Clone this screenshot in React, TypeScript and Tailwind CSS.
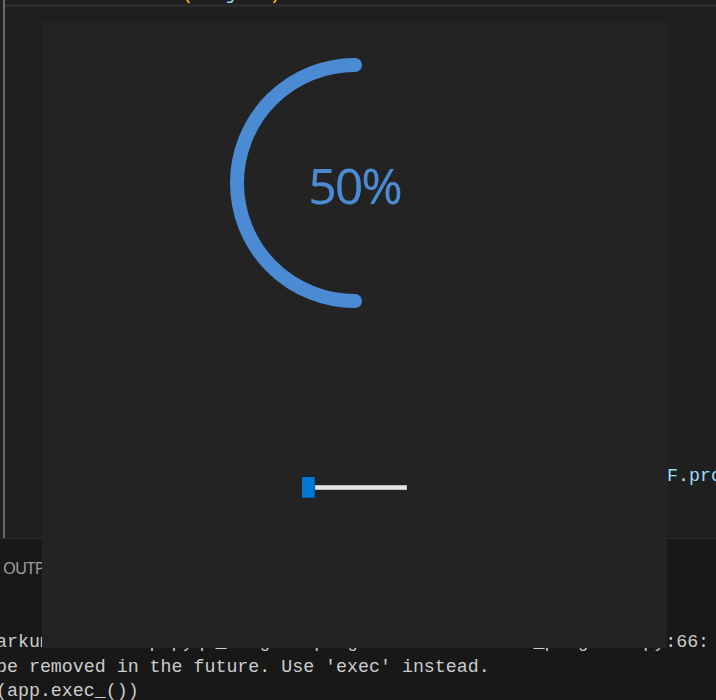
import React from "react";

const mono = { fontFamily: '"Liberation Mono", "DejaVu Sans Mono", monospace' };

export default function App() {
  return (
    <div className="relative w-[716px] h-[700px] overflow-hidden bg-[#1f1f1f]">
      {/* Editor area */}
      <div className="flex h-[538px]">
        <div className="w-[3px]" />
        <div className="w-[2px] bg-[#6a6a6a]" />
        <div className="flex-1 min-w-0 flex flex-col">
          <div className="h-[4px] overflow-hidden">
            <div
              className="-mt-[18px] pl-[177px] text-[18.3px] leading-[25px] whitespace-pre"
              style={mono}
            >
              <span className="text-[#ffd700]">(</span>
              <span>{"   "}</span>
              <span className="text-[#9cdcfe]">j</span>
              <span>{"   "}</span>
              <span className="text-[#ffd700]">)</span>
            </div>
          </div>
          <div className="h-[3px] bg-[#2a2a2a]" />
          <div
            className="mt-[457px] pl-[662px] text-[18.3px] leading-[25px] whitespace-nowrap"
            style={mono}
          >
            <span className="text-[#9cdcfe]">F</span>
            <span className="text-[#d4d4d4]">.</span>
            <span className="text-[#9cdcfe]">progress</span>
          </div>
        </div>
      </div>

      {/* Panel */}
      <div className="h-[162px] border-t border-[#2b2b2b] bg-[#181818] overflow-hidden">
        <div
          className="pt-[19px] pl-[3px] text-[16.5px] leading-[20px] text-[#9d9d9d] tracking-[-0.8px]"
          style={{ fontFamily: '"Noto Sans", "Open Sans", sans-serif' }}
        >
          OUTPUT
        </div>
        <div
          className="mt-[52px] -ml-[4px] text-[18.3px] leading-[24.5px] text-[#cccccc] whitespace-pre"
          style={mono}
        >
          <div>{"arkumar\\Desktop\\pyqt_widgets\\progress\\src\\rounded_progress.py:66: DeprecationWarning: exec_ is deprecated and will"}</div>
          <div>{"be removed in the future. Use 'exec' instead."}</div>
          <div>{"(app.exec_())"}</div>
        </div>
      </div>

      {/* Overlay window */}
      <div className="absolute left-[42px] top-[22px] w-[625px] h-[626px] bg-[#232323] flex flex-col items-center pt-[36px]">
        <div className="relative w-[250px] h-[250px]">
          <svg width="250" height="250" viewBox="0 0 250 250" className="absolute inset-0">
            <path
              d="M125 7 A118 118 0 0 0 125 243"
              fill="none"
              stroke="#4a8bd4"
              strokeWidth="14"
              strokeLinecap="round"
            />
          </svg>
          <div className="absolute inset-0 flex items-center justify-center">
            <span
              className="text-[50px] leading-none text-[#4a8bd4] tracking-[-2px] pt-[4px]"
              style={{ fontFamily: '"Noto Sans", "Open Sans", sans-serif' }}
            >
              50%
            </span>
          </div>
        </div>
        <div className="mt-[169px] w-[105px] h-[21px] flex items-center">
          <div className="w-[13px] h-[21px] bg-[#0078d7] border-r border-b border-[#005fa8]" />
          <div className="flex-1 h-[5px] bg-[#e6e6e6] border border-[#bdbdbd]" />
        </div>
      </div>
    </div>
  );
}
